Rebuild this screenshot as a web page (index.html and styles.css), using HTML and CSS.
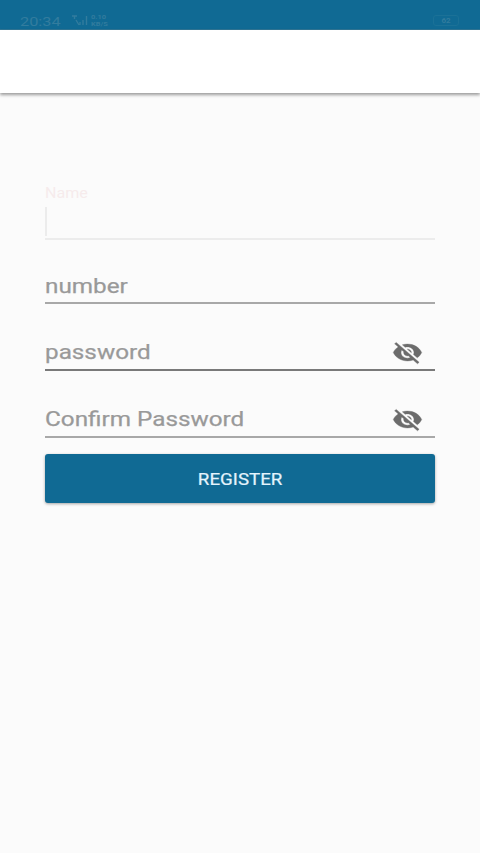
FILE: index.html
```html
<!DOCTYPE html>
<html lang="en">
<head>
<meta charset="utf-8">
<meta name="viewport" content="width=device-width, initial-scale=1">
<title>Register</title>
<link rel="stylesheet" href="styles.css">
</head>
<body>
<header class="status">
  <span class="time">20:34</span>
  <svg class="signal" width="17" height="11" viewBox="0 0 17 11" fill="none" stroke="currentColor" stroke-width="1.400"><path d="M1 1h5M3.500 1v3M5 5l3 5M9 10V7M12 10V5M15.500 10V1"/></svg>
  <span class="speed"><span>0.10</span><span>KB/S</span></span>
  <span class="battery">62</span>
</header>
<div class="appbar"></div>
<main class="form">
  <div class="field name"><span class="caption">Name</span><span class="cursor"></span></div>
  <div class="field number"><span class="hint">number</span></div>
  <div class="field password"><span class="hint">password</span>
    <svg class="eye" viewBox="0 0 24 24" preserveAspectRatio="none"><path d="M12 7c2.760 0 5 2.240 5 5 0 .65-.13 1.260-.36 1.830l2.920 2.920c1.510-1.260 2.700-2.890 3.430-4.750-1.730-4.390-6-7.500-11-7.500-1.400 0-2.740.25-3.980.7l2.160 2.160C10.740 7.130 11.350 7 12 7zM2 4.270l2.280 2.280.46.46C3.080 8.300 1.780 10.020 1 12c1.730 4.390 6 7.500 11 7.500 1.550 0 3.030-.3 4.380-.84l.42.42L19.730 22 21 20.730 3.270 3 2 4.270zM7.530 9.800l1.550 1.550c-.05.21-.08.43-.08.65 0 1.660 1.340 3 3 3 .22 0 .44-.03.65-.08l1.550 1.550c-.67.33-1.410.53-2.200.53-2.760 0-5-2.240-5-5 0-.79.2-1.530.53-2.200zm4.310-.78l3.150 3.150.02-.16c0-1.660-1.340-3-3-3l-.17.01z"/></svg>
  </div>
  <div class="field confirm"><span class="hint">Confirm Password</span>
    <svg class="eye" viewBox="0 0 24 24" preserveAspectRatio="none"><path d="M12 7c2.760 0 5 2.240 5 5 0 .65-.13 1.260-.36 1.830l2.920 2.920c1.510-1.260 2.700-2.890 3.430-4.750-1.730-4.390-6-7.500-11-7.500-1.400 0-2.740.25-3.980.7l2.160 2.160C10.740 7.130 11.350 7 12 7zM2 4.270l2.280 2.280.46.46C3.080 8.300 1.780 10.020 1 12c1.730 4.390 6 7.500 11 7.500 1.550 0 3.030-.3 4.380-.84l.42.42L19.730 22 21 20.730 3.270 3 2 4.270zM7.530 9.800l1.550 1.550c-.05.21-.08.43-.08.65 0 1.660 1.340 3 3 3 .22 0 .44-.03.65-.08l1.550 1.550c-.67.33-1.410.53-2.200.53-2.760 0-5-2.240-5-5 0-.79.2-1.530.53-2.200zm4.310-.78l3.150 3.150.02-.16c0-1.660-1.340-3-3-3l-.17.01z"/></svg>
  </div>
  <button class="register" type="button"><span class="label">REGISTER</span></button>
</main>
</body>
</html>
```
FILE: styles.css
```css
* { box-sizing: border-box; }
body {
  margin: 0;
  min-height: 853px;
  background: #fbfbfb;
  font-family: Roboto, "Liberation Sans", sans-serif;
}
.status {
  display: flex;
  align-items: flex-start;
  height: 30px;
  padding: 14px 21px 0 20px;
  background: #106a94;
  border-bottom: 1px solid #2f7594;
  color: #327c9e;
}
.time {
  width: 51px;
  font-size: 13.5px;
  line-height: 14px;
  transform: scaleX(1.21);
  transform-origin: left;
}
.signal { margin-top: 1px; }
.speed {
  display: flex;
  flex-direction: column;
  gap: 1px;
  margin: 0 0 0 3px;
  font-size: 5.5px;
  font-weight: 700;
  line-height: 6px;
  transform: scaleX(1.35);
  transform-origin: left;
}
.battery {
  width: 26px;
  height: 11px;
  margin: 1px 0 0 auto;
  border: 1px solid #1b7197;
  border-radius: 3px;
  font-size: 8px;
  font-weight: 700;
  line-height: 9px;
  text-align: center;
}
.appbar {
  height: 63px;
  background: #fff;
  box-shadow: 0 2px 3px rgba(0, 0, 0, .38);
}
.form {
  display: flex;
  flex-direction: column;
  padding: 91px 45px 0;
}
.field {
  display: flex;
  align-items: center;
  justify-content: space-between;
  border-bottom: 2px solid #a8a8a8;
}
.name {
  flex-direction: column;
  align-items: flex-start;
  justify-content: flex-start;
  height: 56px;
  border-bottom-color: #ececec;
}
.caption {
  font-size: 14px;
  line-height: 18px;
  color: #f6ebec;
  transform: scaleX(1.15);
  transform-origin: left;
}
.cursor {
  width: 2px;
  height: 29px;
  margin-top: 5px;
  background: #ececec;
}
.number { height: 64px; padding-top: 30px; }
.password { height: 67px; padding-top: 31px; border-bottom-color: #797979; }
.confirm { height: 67px; padding-top: 31px; }
.hint {
  font-size: 21px;
  line-height: 28px;
  color: #999;
  -webkit-text-stroke: .25px #999;
  transform: scaleX(1.156);
  transform-origin: left;
  white-space: nowrap;
}
.eye {
  width: 31px;
  height: 27px;
  margin-right: 12px;
  fill: #6c6c6c;
  stroke: #6c6c6c;
  stroke-width: .3;
}
.register {
  height: 49px;
  margin-top: 16px;
  padding: 2px 0 0;
  border: 0;
  border-radius: 3px;
  background: #106a94;
  box-shadow: 0 1px 3px rgba(0, 0, 0, .35);
  color: #e4f4fd;
  font: 400 16px/47px Roboto, "Liberation Sans", sans-serif;
}
.label {
  display: inline-block;
  -webkit-text-stroke: .2px #e4f4fd;
  transform: scaleX(1.17);
}
```
